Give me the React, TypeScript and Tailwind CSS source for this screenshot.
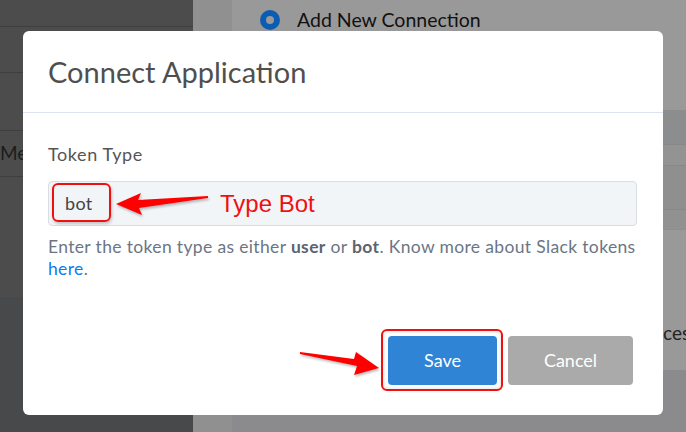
import React from "react";

function LeftArrow() {
  return (
    <svg width="100" height="30" viewBox="0 0 100 30" className="absolute left-[113px] top-[189px]" style={{ filter: "drop-shadow(1px 2px 1px rgba(0,0,0,0.25))" }}>
      <polygon points="3,15 28,4 25,11 95,7 95,9 26,19 29,26" fill="#f00" />
    </svg>
  );
}

function RightArrow() {
  return (
    <svg width="90" height="36" viewBox="0 0 90 36" className="absolute left-[296px] top-[344px]" style={{ filter: "drop-shadow(1px 2px 1px rgba(0,0,0,0.25))" }}>
      <polygon points="4,8 58,15 60,8 83,24 58,31 61,22 4,10" fill="#f00" />
    </svg>
  );
}

export default function App() {
  return (
    <div className="relative flex h-[432px] w-[686px] overflow-hidden font-['Lato',sans-serif]">
      {/* sidebar */}
      <div className="flex w-[193px] flex-col bg-[#4c4c4c]">
        <div className="h-[27px] border-b border-[#3f3f3f]" />
        <div className="h-[46px] border-b border-[#3f3f3f]" />
        <div className="h-[58px] border-b border-[#3f3f3f]" />
        <div className="flex h-[46px] items-center border-b border-[#3f3f3f]">
          <div className="w-[23px] overflow-hidden whitespace-nowrap text-[19px] text-[#1c1c1c]">Me</div>
        </div>
        <div className="h-[120px]" />
        <div className="flex-1 bg-[#48494b]" />
      </div>
      <div className="w-[39px] bg-[#909090]" />
      {/* main area */}
      <div className="flex flex-1 flex-col bg-[#999999]">
        <div className="flex h-[40px] items-center gap-[17px] pl-[28px]">
          <div className="flex h-[20px] w-[20px] items-center justify-center rounded-full bg-[#0b5db3]">
            <div className="h-[8px] w-[8px] rounded-full bg-[#999999]" />
          </div>
          <span className="text-[19.5px] text-[#111]">Add New Connection</span>
        </div>
        <div className="h-[70px]" />
        <div className="h-[35px] border-b border-[#888] bg-[#8c8d8f]" />
        <div className="h-[21px] border-b border-[#888] bg-[#939393]" />
        <div className="h-[44px] border-b border-[#888] bg-[#8f8f8f]" />
        <div className="h-[20px] border-b border-[#8a8f95] bg-[#919191]" />
        <div className="flex h-[140px] justify-end bg-[#999999] pt-[91px]">
          <div className="w-[23px] overflow-hidden whitespace-nowrap text-[19px] leading-[24px] text-[#222]">ces</div>
        </div>
        <div className="flex-1 bg-[#8b8b8d]" />
      </div>

      {/* dialog */}
      <div className="absolute left-[23px] top-[31px] flex h-[384px] w-[640px] flex-col rounded-[6px] bg-white">
        <div className="flex h-[82px] items-center border-b border-[#dce4ef] pl-[25px]">
          <h2 className="text-[29px] font-normal text-[#4f4f4f]">Connect Application</h2>
        </div>
        <div className="flex flex-col pl-[25px] pr-[26px] pt-[30px]">
          <label className="text-[18px] leading-[22px] tracking-[0.6px] text-[#555]">Token Type</label>
          <div className="mt-[16px] flex h-[45px] items-center rounded-[4px] border border-[#d9dee4] bg-[#f1f5f8] pl-[16px] text-[18px] tracking-[0.3px] text-[#444]">
            bot
          </div>
          <p className="mt-[10px] whitespace-nowrap text-[17.5px] leading-[22px] tracking-[0.35px] text-[#6b7684]">
            Enter the token type as either <b className="text-[#5b6470]">user</b> or <b className="text-[#5b6470]">bot</b>. Know more about Slack tokens
            <br />
            <span className="text-[#0d7bf0]">here</span>.
          </p>
        </div>
        <div className="mt-auto flex justify-end gap-[11px] pb-[30px] pr-[30px]">
          <button className="h-[49px] w-[109px] rounded-[4px] bg-[#2f84d6] text-[18px] text-white">Save</button>
          <button className="h-[49px] w-[125px] rounded-[4px] bg-[#aaaaaa] text-[18px] text-white">Cancel</button>
        </div>
      </div>

      {/* annotations */}
      <div className="absolute left-[52px] top-[183px] h-[39px] w-[59px] rounded-[6px] border-2 border-[#f01010] shadow-[1px_2px_3px_rgba(0,0,0,0.2)]" />
      <LeftArrow />
      <span className="absolute left-[220px] top-[186px] font-['Liberation_Sans',sans-serif] text-[24px] text-[#f01010]">Type Bot</span>
      <div className="absolute left-[381px] top-[329px] h-[62px] w-[122px] rounded-[6px] border-2 border-[#f01010] shadow-[inset_0_0_4px_rgba(0,0,0,0.15)]" />
      <RightArrow />
    </div>
  );
}
